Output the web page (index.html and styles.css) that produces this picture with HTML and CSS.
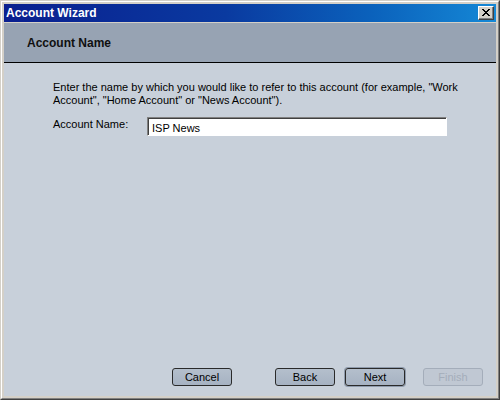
FILE: index.html
```html
<!DOCTYPE html>
<html>
<head>
<meta charset="utf-8">
<link rel="stylesheet" href="styles.css">
</head>
<body>
<div class="window">
  <div class="frame">
    <div class="titlebar">
      <span class="title">Account Wizard</span>
      <span class="close"><svg width="8" height="7" viewBox="0 0 8 7"><path d="M0 0h2v1h1v1h2v-1h1v-1h2v1h-1v1h-1v1h-1v1h1v1h1v1h1v1h-2v-1h-1v-1h-2v1h-1v1h-2v-1h1v-1h1v-1h1v-1h-1v-1h-1v-1h-1z" fill="#000"/></svg></span>
    </div>
    <div class="header">
      <h1 class="heading">Account Name</h1>
    </div>
    <div class="content">
      <p class="intro">Enter the name by which you would like to refer to this account (for example, "Work<br>Account", "Home Account" or "News Account").</p>
      <div class="field">
        <label class="label">Account Name:</label>
        <div class="input">ISP News</div>
      </div>
      <div class="buttons">
        <span class="btn btn-cancel">Cancel</span>
        <span class="btn btn-back">Back</span>
        <span class="btn btn-next">Next</span>
        <span class="btn btn-finish">Finish</span>
      </div>
    </div>
  </div>
</div>
</body>
</html>
```
FILE: styles.css
```css
html, body {
  margin: 0;
  padding: 0;
}
body {
  width: 500px;
  height: 400px;
  overflow: hidden;
  font-family: "Liberation Sans", Arial, sans-serif;
  font-size: 11px;
  color: #000;
}
.window {
  box-sizing: border-box;
  width: 500px;
  height: 400px;
  border: 1px solid;
  border-color: #d4d0c8 #404040 #404040 #d4d0c8;
  background: #d4d0c8;
}
.frame {
  box-sizing: border-box;
  height: 100%;
  border: 1px solid;
  border-color: #ffffff #808080 #808080 #ffffff;
  padding: 2px;
  display: flex;
  flex-direction: column;
}
.titlebar {
  height: 18px;
  flex: none;
  display: flex;
  align-items: center;
  justify-content: space-between;
  padding: 0 2px 0 2px;
  background: linear-gradient(to right, #0a1f8f 0%, #0a3aa0 45%, #0b62bc 75%, #1588d6 100%);
}
.title {
  color: #fff;
  font-weight: bold;
  font-size: 12px;
}
.close {
  box-sizing: border-box;
  width: 16px;
  height: 14px;
  background: #d4d0c8;
  border: 1px solid;
  border-color: #ffffff #404040 #404040 #ffffff;
  box-shadow: inset -1px -1px 0 #808080;
  display: flex;
  align-items: center;
  justify-content: center;
  padding-bottom: 1px;
}
.close svg {
  display: block;
}
.header {
  flex: none;
  height: 40px;
  margin-top: 1px;
  box-sizing: border-box;
  border-bottom: 1px solid #000;
  background-color: #97a3b3;
  display: flex;
  align-items: center;
  padding-left: 23px;
}
.heading {
  margin: 0;
  font-size: 12px;
  font-weight: bold;
  color: #101010;
}
.content {
  flex: 1;
  background: #c8d0da;
  display: flex;
  flex-direction: column;
  padding: 18px 0 10px 49px;
}
.intro {
  margin: 0;
  line-height: 13px;
}
.field {
  display: flex;
  align-items: flex-start;
  margin-top: 10px;
}
.label {
  width: 94px;
  padding-top: 1px;
  line-height: 13px;
}
.input {
  box-sizing: border-box;
  width: 300px;
  height: 19px;
  background: #fff;
  border: 1px solid;
  border-color: #808080 #ffffff #ffffff #808080;
  box-shadow: inset 1px 1px 0 #404040;
  padding: 4px 0 0 4px;
  line-height: 13px;
}
.buttons {
  margin-top: auto;
  display: flex;
  align-items: center;
}
.btn {
  box-sizing: border-box;
  width: 60px;
  height: 18px;
  border: 1px solid #2a2a2a;
  border-radius: 3px;
  background: linear-gradient(#b4bfcc, #a6b2c2);
  display: flex;
  align-items: center;
  justify-content: center;
  line-height: 13px;
}
.btn-cancel {
  margin-left: 119px;
}
.btn-back {
  margin-left: 43px;
}
.btn-next {
  margin-left: 10px;
  box-shadow: 0 0 0 1px #8e9aab;
}
.btn-finish {
  margin-left: 18px;
  border-color: #a4adba;
  color: #a4adba;
  background: #c0c8d3;
}
```
